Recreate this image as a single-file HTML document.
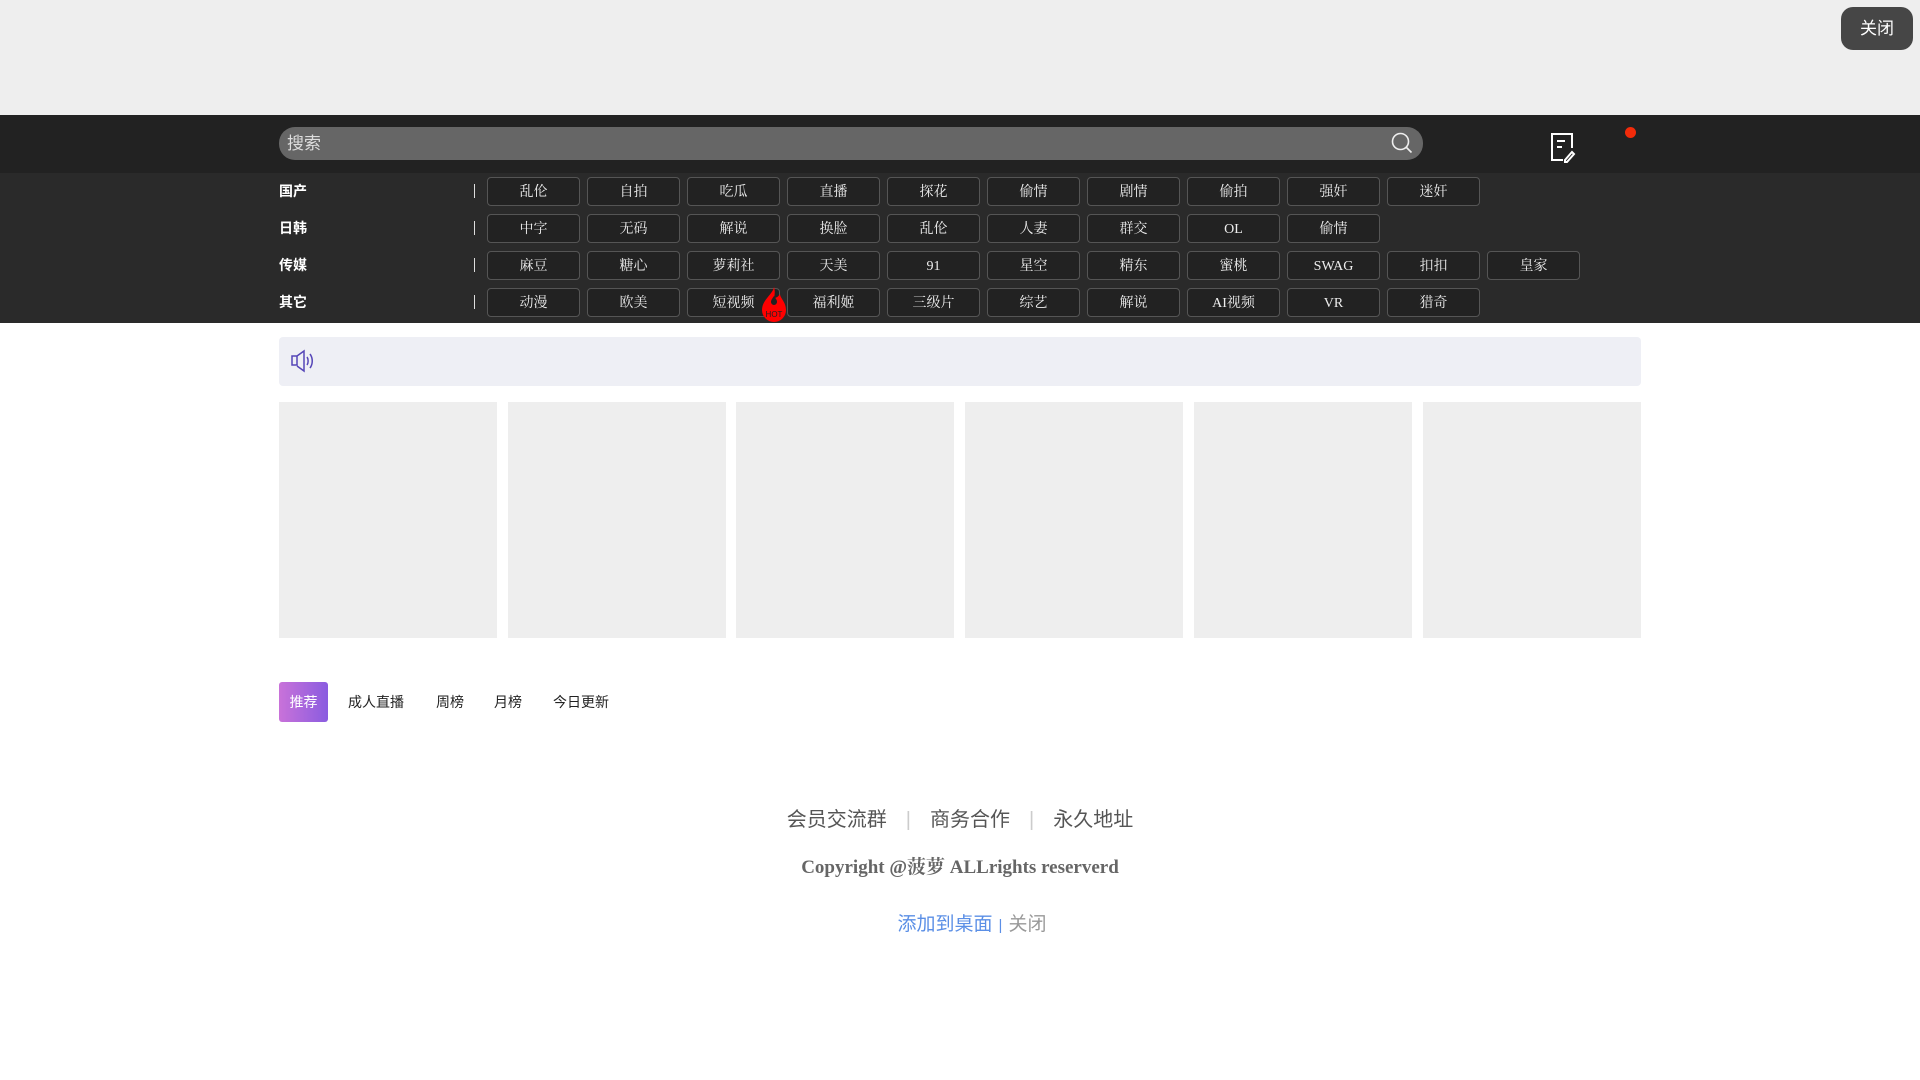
<!DOCTYPE html>
<html><head><meta charset="utf-8"><style>
*{margin:0;padding:0;box-sizing:border-box}
body{width:1920px;height:1080px;background:#fff;position:relative;overflow:hidden;font-family:"Liberation Sans","Noto Sans CJK SC",sans-serif}
.a{position:absolute}
.close{left:1841px;top:7px;width:72px;height:43px;background:#464646;border-radius:12px;color:#fff;font-size:17px;line-height:43px;text-align:center}
.btn{position:absolute;width:93px;height:29px;border:1px solid #555;border-radius:4px;background:#222;color:#eee;font-family:"Liberation Serif","Noto Serif CJK SC",serif;font-size:14px;line-height:29px;text-align:center}
.lab{position:absolute;left:279px;color:#fff;font-weight:bold;font-size:14px;line-height:29px}
.bar{position:absolute;left:474px;width:1px;height:14px;background:#ddd}
.card{position:absolute;top:402px;width:218px;height:236px;background:#eee}
.tab{position:absolute;top:682px;height:40px;line-height:40px;font-size:14px;color:#222}
</style></head><body>
<div class="a" style="left:0;top:0;width:1920px;height:115px;background:#eee"></div>
<div class="a close">关闭</div>
<div class="a" style="left:0;top:115px;width:1920px;height:58px;background:#222"></div>
<div class="a" style="left:279px;top:127px;width:1144px;height:33px;background:#666;border-radius:16px;color:#ddd;font-size:17px;line-height:33px;padding-left:8px">搜索</div>
<svg class="a" style="left:1390px;top:131px" width="24" height="24" viewBox="0 0 24 24" fill="none" stroke="#eee" stroke-width="1.6"><circle cx="10.5" cy="10.5" r="8"/><path d="M16.5 16.5l5 5"/></svg>
<svg class="a" style="left:1548px;top:131px" width="28" height="32" viewBox="0 0 28 32" fill="none" stroke="#fff" stroke-width="2"><path d="M15 29H4V3h20v14"/><path d="M9 10h8M9 16h5"/><path d="M17 29l7-8 2 2-7 8h-2z"/></svg>
<div class="a" style="left:1625px;top:127px;width:11px;height:11px;border-radius:50%;background:#f22b0a"></div>
<div class="a" style="left:0;top:173px;width:1920px;height:150px;background:#2a2a2a"></div>
<div class="lab" style="top:177px">国产</div><div class="bar" style="top:184px"></div>
<div class="lab" style="top:214px">日韩</div><div class="bar" style="top:221px"></div>
<div class="lab" style="top:251px">传媒</div><div class="bar" style="top:258px"></div>
<div class="lab" style="top:288px">其它</div><div class="bar" style="top:295px"></div>

<div class="btn" style="left:487px;top:177px">乱伦</div><div class="btn" style="left:587px;top:177px">自拍</div><div class="btn" style="left:687px;top:177px">吃瓜</div><div class="btn" style="left:787px;top:177px">直播</div><div class="btn" style="left:887px;top:177px">探花</div><div class="btn" style="left:987px;top:177px">偷情</div><div class="btn" style="left:1087px;top:177px">剧情</div><div class="btn" style="left:1187px;top:177px">偷拍</div><div class="btn" style="left:1287px;top:177px">强奸</div><div class="btn" style="left:1387px;top:177px">迷奸</div>

<div class="btn" style="left:487px;top:214px">中字</div><div class="btn" style="left:587px;top:214px">无码</div><div class="btn" style="left:687px;top:214px">解说</div><div class="btn" style="left:787px;top:214px">换脸</div><div class="btn" style="left:887px;top:214px">乱伦</div><div class="btn" style="left:987px;top:214px">人妻</div><div class="btn" style="left:1087px;top:214px">群交</div><div class="btn" style="left:1187px;top:214px">OL</div><div class="btn" style="left:1287px;top:214px">偷情</div>

<div class="btn" style="left:487px;top:251px">麻豆</div><div class="btn" style="left:587px;top:251px">糖心</div><div class="btn" style="left:687px;top:251px">萝莉社</div><div class="btn" style="left:787px;top:251px">天美</div><div class="btn" style="left:887px;top:251px">91</div><div class="btn" style="left:987px;top:251px">星空</div><div class="btn" style="left:1087px;top:251px">精东</div><div class="btn" style="left:1187px;top:251px">蜜桃</div><div class="btn" style="left:1287px;top:251px">SWAG</div><div class="btn" style="left:1387px;top:251px">扣扣</div><div class="btn" style="left:1487px;top:251px">皇家</div>

<div class="btn" style="left:487px;top:288px">动漫</div><div class="btn" style="left:587px;top:288px">欧美</div><div class="btn" style="left:687px;top:288px">短视频</div><div class="btn" style="left:787px;top:288px">福利姬</div><div class="btn" style="left:887px;top:288px">三级片</div><div class="btn" style="left:987px;top:288px">综艺</div><div class="btn" style="left:1087px;top:288px">解说</div><div class="btn" style="left:1187px;top:288px">AI视频</div><div class="btn" style="left:1287px;top:288px">VR</div><div class="btn" style="left:1387px;top:288px">猎奇</div>
<svg class="a" style="left:760px;top:286px" width="28" height="36" viewBox="0 0 28 36"><path d="M14 1C13 8 2 14 2 24a12 12 0 0024 0C26 16 20 12 20 8c-2 3-4 4-6 4 1-4 1-8 0-11z" fill="#f00"/><path d="M14 10c-2 3-3 4-3 6a3 3 0 006 0c0-2-1-3-3-6z" fill="#222"/><text x="14" y="31" font-size="8" fill="#222" text-anchor="middle" font-family="Liberation Sans">HOT</text></svg>

<div class="a" style="left:279px;top:337px;width:1362px;height:49px;background:#eeeff5;border-radius:4px"></div>
<svg class="a" style="left:290px;top:349px" width="26" height="24" viewBox="0 0 26 24" fill="none" stroke="#5546b8" stroke-width="1.5"><path d="M2 7h5v9H2zM7 7l7-5v20l-7-5"/><path d="M17 8c1.5 2 1.5 6 0 8M20 5c3 4 3 10 0 14"/></svg>

<div class="card" style="left:279px"></div><div class="card" style="left:508px"></div><div class="card" style="left:736px"></div><div class="card" style="left:965px"></div><div class="card" style="left:1194px"></div><div class="card" style="left:1423px"></div>

<div class="tab" style="left:279px;width:49px;border-radius:3px;background:linear-gradient(90deg,#c972d9,#8a5ce0);color:#fff;text-align:center">推荐</div>
<div class="tab" style="left:348px">成人直播</div>
<div class="tab" style="left:436px">周榜</div>
<div class="tab" style="left:494px">月榜</div>
<div class="tab" style="left:553px">今日更新</div>

<div class="a" style="left:0;top:805px;width:1920px;text-align:center;font-size:20px;color:#555;line-height:30px">会员交流群<span style="color:#ccc;margin:0 19px">|</span>商务合作<span style="color:#ccc;margin:0 19px">|</span>永久地址</div>
<div class="a" style="left:0;top:855px;width:1920px;text-align:center;font-family:'Liberation Serif','Noto Serif CJK SC',serif;font-weight:bold;font-size:19px;color:#666;line-height:26px">Copyright @菠萝 ALLrights reserverd</div>
<div class="a" style="left:12px;top:911px;width:1920px;text-align:center;font-size:19px;line-height:28px"><span style="color:#5b8fe6">添加到桌面</span><span style="color:#5b8fe6;margin:0 6px;font-size:15px">|</span><span style="color:#999">关闭</span></div>
</body></html>
